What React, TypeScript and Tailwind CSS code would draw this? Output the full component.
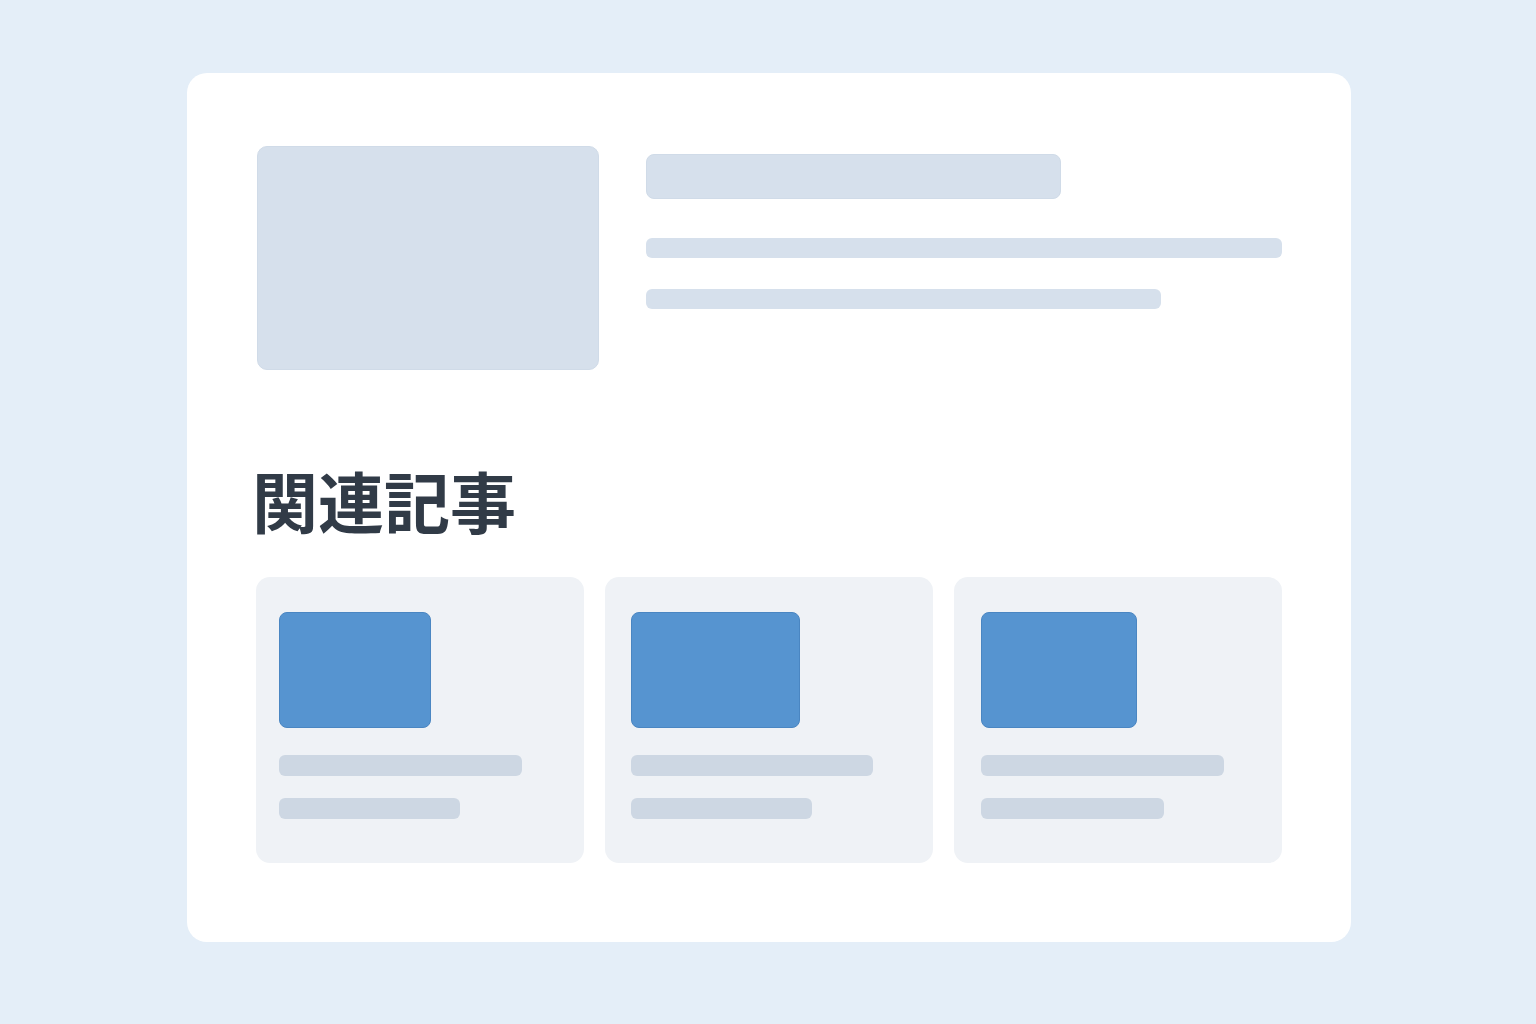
const related = [
  { pad: "pl-[23px]", thumb: "w-[152px]", line1: "w-[243px]", line2: "w-[181px]" },
  { pad: "pl-[26px]", thumb: "w-[169px]", line1: "w-[242px]", line2: "w-[181px]" },
  { pad: "pl-[27px]", thumb: "w-[156px]", line1: "w-[243px]", line2: "w-[183px]" },
];

function RelatedCard({
  pad,
  thumb,
  line1,
  line2,
}: {
  pad: string;
  thumb: string;
  line1: string;
  line2: string;
}) {
  return (
    <div className={`${pad} h-[286px] rounded-[14px] bg-[#eff2f6] pt-[35px]`}>
      <div className={`${thumb} h-[116px] rounded-[8px] border border-[#4a86c2] bg-[#5694d0]`} />
      <div className={`${line1} mt-[27px] h-[21px] rounded-[6px] bg-[#cdd7e3]`} />
      <div className={`${line2} mt-[22px] h-[21px] rounded-[6px] bg-[#cdd7e3]`} />
    </div>
  );
}

export default function App() {
  return (
    <div className="min-h-screen w-full bg-[#e4eef8] pl-[2px] pt-[73px] font-['Noto_Sans_CJK_JP','Noto_Sans',sans-serif]">
      <div className="mx-auto h-[869px] w-[1164px] rounded-[20px] bg-white px-[69px] pt-[73px]">
        {/* article header skeleton */}
        <div className="flex gap-[47px] pl-px">
          <div className="h-[224px] w-[342px] shrink-0 rounded-[10px] border border-[#d0dbe8] bg-[#d6e0ec]" />
          <div className="flex-1 pt-[8px]">
            <div className="h-[45px] w-[415px] rounded-[8px] border border-[#d0dbe8] bg-[#d6e0ec]" />
            <div className="mt-[39px] h-[20px] w-[636px] rounded-[6px] bg-[#d6e0ec]" />
            <div className="mt-[31px] h-[20px] w-[515px] rounded-[6px] bg-[#d6e0ec]" />
          </div>
        </div>

        <h2 className="-ml-[4px] mt-[89px] text-[66px] font-bold leading-[80px] text-[#313b47]">
          関連記事
        </h2>

        <div className="mt-[38px] grid grid-cols-3 gap-[21px]">
          {related.map((r, i) => (
            <RelatedCard key={i} {...r} />
          ))}
        </div>
      </div>
    </div>
  );
}
